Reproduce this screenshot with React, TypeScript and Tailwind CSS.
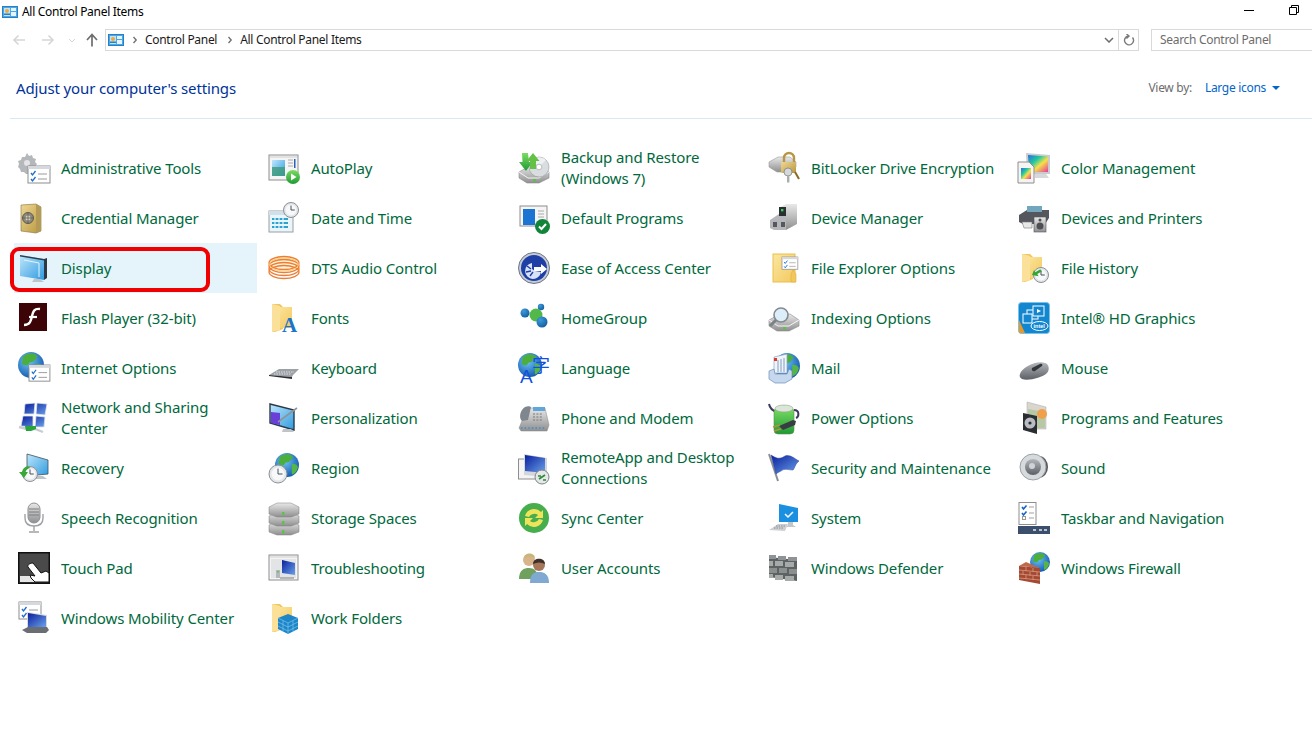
import type { ReactNode } from "react";

const Defs = () => (
  <svg width="0" height="0" className="block h-0 w-0">
    <defs>
      <linearGradient id="gray" x1="0" y1="0" x2="0" y2="1"><stop offset="0" stopColor="#e8e8e8" /><stop offset="1" stopColor="#8f8f8f" /></linearGradient>
      <linearGradient id="dark" x1="0" y1="0" x2="0" y2="1"><stop offset="0" stopColor="#b4b8bc" /><stop offset="1" stopColor="#5c6066" /></linearGradient>
      <linearGradient id="sky" x1="0" y1="0" x2="1" y2="1"><stop offset="0" stopColor="#bfe6fb" /><stop offset="1" stopColor="#2f9be0" /></linearGradient>
      <linearGradient id="navy" x1="0" y1="0" x2="1" y2="1"><stop offset="0" stopColor="#0a1f9c" /><stop offset="1" stopColor="#6aa0ea" /></linearGradient>
      <linearGradient id="gold" x1="0" y1="0" x2="1" y2="1"><stop offset="0" stopColor="#efd894" /><stop offset="1" stopColor="#b8963f" /></linearGradient>
      <linearGradient id="folder" x1="0" y1="0" x2="1" y2="1"><stop offset="0" stopColor="#fbe6a0" /><stop offset="1" stopColor="#f3c95f" /></linearGradient>
      <linearGradient id="green" x1="0" y1="0" x2="0" y2="1"><stop offset="0" stopColor="#7bdc62" /><stop offset="1" stopColor="#1f9a35" /></linearGradient>
      <linearGradient id="rainbow" x1="0" y1="0" x2="1" y2="1"><stop offset="0" stopColor="#2b6be0" /><stop offset="0.35" stopColor="#22c8a0" /><stop offset="0.6" stopColor="#f6e04a" /><stop offset="1" stopColor="#e8389a" /></linearGradient>
      <radialGradient id="globe" cx="0.4" cy="0.35" r="0.75"><stop offset="0" stopColor="#6ec4f5" /><stop offset="1" stopColor="#0b4fa8" /></radialGradient>
      <radialGradient id="ball" cx="0.35" cy="0.3" r="0.8"><stop offset="0" stopColor="#3f9ad8" /><stop offset="1" stopColor="#0e5a9e" /></radialGradient>
    </defs>
  </svg>
);

const Ico = ({ children }: { children: ReactNode }) => (
  <svg viewBox="0 0 32 32" className="h-8 w-8 shrink-0 overflow-visible">{children}</svg>
);

const Globe = ({ cx, cy, r }: { cx: number; cy: number; r: number }) => (
  <g>
    <circle cx={cx} cy={cy} r={r} fill="url(#globe)" />
    <path d={`M${cx - r * 0.6} ${cy - r * 0.7}q${r * 0.7} -${r * 0.4} ${r * 1.1} 0q-${r * 0.2} ${r * 0.5} -${r * 0.6} ${r * 0.5}q-${r * 0.2} ${r * 0.4} -${r * 0.6} ${r * 0.1}z`} fill="#4caf3c" />
    <path d={`M${cx + r * 0.4} ${cy - r * 0.1}q${r * 0.5} 0 ${r * 0.5} ${r * 0.3}q-${r * 0.1} ${r * 0.5} -${r * 0.5} ${r * 0.6}z`} fill="#55b545" />
  </g>
);

const Clock = ({ cx, cy, r }: { cx: number; cy: number; r: number }) => (
  <g>
    <circle cx={cx} cy={cy} r={r} fill="#e4e7ea" stroke="#8b9096" strokeWidth="1" />
    <circle cx={cx} cy={cy} r={r * 0.72} fill="#f7f8f9" />
    <path d={`M${cx} ${cy - r * 0.6}V${cy}H${cx + r * 0.5}`} fill="none" stroke="#4b5157" strokeWidth="1" />
  </g>
);

const Folder = () => (
  <g>
    <path d="M4 2h8l3 3v22l-8 3H4z" fill="#f0c75e" />
    <path d="M7 5h17v21H7z" fill="url(#folder)" />
    <path d="M4 2l8 2v24l-8 2z" fill="#fbe09a" />
  </g>
);

const Drive = ({ y = 0 }: { y?: number }) => (
  <g transform={`translate(0 ${y})`}>
    <path d="M1 18l11-6h10l9 6v6l-10 5H9l-8-5z" fill="url(#gray)" stroke="#8a8a8a" strokeWidth=".6" />
    <path d="M1 18l9 6h11l10-6" fill="none" stroke="#f5f5f5" strokeWidth="1" />
    <rect x="15" y="25" width="3" height="2.5" fill="#5cc24a" />
  </g>
);

const Check = ({ x, y, s = 1 }: { x: number; y: number; s?: number }) => (
  <g transform={`translate(${x} ${y}) scale(${s})`}>
    <rect width="22" height="17" fill="#fff" stroke="#8d8d8d" />
    <rect width="22" height="3" fill="#d5d8dc" />
    <path d="M3 7l1.5 2 3-4M3 13l1.5 2 3-4" fill="none" stroke="#1c6fd0" strokeWidth="1.3" />
    <path d="M10 8h9M10 13h9" stroke="#9a9a9a" />
  </g>
);

const Win = ({ children }: { children?: ReactNode }) => (
  <g>
    <rect x="1" y="3" width="29" height="25" fill="#f5f5f5" stroke="#8e8e8e" />
    <path d="M2 4h27v2H2z" fill="#e2e2e2" />
    {children}
  </g>
);

const icons: Record<string, ReactNode> = {
  admin: (
    <>
      <path d="M9 1l2 3 3-1 1 3 3 1-1 3 2 2-2 3 1 3-3 1-1 3H8l-2-2-3 0-1-3-2-2 1-3-1-3 3-1 1-3 3 0z" fill="#b5b8bb" />
      <circle cx="9" cy="11" r="3" fill="#e2e4e6" />
      <Check x={10} y={14} />
    </>
  ),
  autoplay: (
    <>
      <Win>
        <rect x="4" y="8" width="13" height="16" fill="url(#sky)" />
        <rect x="4" y="15" width="13" height="9" fill="#3f9a78" opacity=".8" />
        <path d="M20 8h5M20 11h5M20 14h5" stroke="#aaa" />
        <rect x="26" y="7" width="1.5" height="9" fill="#2a62b8" />
      </Win>
      <circle cx="25" cy="25" r="7" fill="url(#green)" />
      <path d="M23 21.5l5.5 3.5-5.5 3.5z" fill="#fff" />
    </>
  ),
  backup: (
    <>
      <Drive y={2} />
      <circle cx="21" cy="15" r="10" fill="#d9dde0" stroke="#9a9a9a" strokeWidth=".6" />
      <path d="M21 15L14 8a10 10 0 0 1 14 0z" fill="#eef0f2" />
      <circle cx="21" cy="15" r="2.800" fill="#fff" stroke="#999" strokeWidth=".6" />
      <path d="M4 1l6 0 1 9h3.500l-6.500 9-7-9h3.500z" fill="url(#green)" />
      <path d="M12 17V9H8.500l6.500-8 6.500 8H18v8z" fill="#63c246" />
    </>
  ),
  bitlocker: (
    <>
      <path d="M1 10l9-5h12l6 5v5l-9 5H9l-8-5z" fill="url(#gray)" stroke="#9a9a9a" strokeWidth=".6" />
      <path d="M16 11V6a5 5 0 0 1 10 0v5" fill="none" stroke="#b89643" strokeWidth="2.4" />
      <rect x="13" y="10" width="15" height="11" rx="1.5" fill="url(#gold)" />
      <path d="M27 20l4 7" stroke="#8a6a24" strokeWidth="2" />
      <circle cx="20" cy="20" r="4" fill="#d5d8da" stroke="#777" strokeWidth=".7" />
      <rect x="19" y="23" width="2.4" height="7.5" fill="#a9adb0" />
    </>
  ),
  color: (
    <>
      <path d="M8 1l24 2v19H9z" fill="#c8ccd0" />
      <path d="M10 3l20 1.5V20H11z" fill="url(#rainbow)" />
      <path d="M17 22h11l3 4H17z" fill="#d6d8da" />
      <path d="M0 10h11l5 5v16H0z" fill="#f4f4f4" stroke="#8e8e8e" />
      <rect x="3" y="16" width="10" height="11" fill="url(#rainbow)" />
    </>
  ),
  credential: (
    <>
      <path d="M3 3l15-1 5 3v24l-5 2-15-2z" fill="url(#gold)" stroke="#85713a" strokeWidth=".6" />
      <path d="M18 2l5 3v24l-5 2z" fill="#b39a55" />
      <circle cx="10" cy="16" r="5.500" fill="#8e8a7c" stroke="#5e5a4e" />
      <circle cx="10" cy="16" r="2.500" fill="#d7d3c5" />
      <path d="M10 11v10M5 16h10" stroke="#55524a" strokeWidth=".7" />
    </>
  ),
  date: (
    <>
      <rect x="1" y="9" width="24" height="21" fill="#e9f5fb" stroke="#9a9ea2" />
      <rect x="1" y="9" width="24" height="4" fill="#cfe0ea" />
      <path d="M4 16h16v2H4zM4 20h16v2H4zM4 24h16v2H4z" fill="#2aa4cf" />
      <path d="M7 15v12M11 15v12M15 15v12" stroke="#e9f5fb" strokeWidth="1.2" />
      <Clock cx={23} cy={8} r={7.5} />
    </>
  ),
  defaults: (
    <>
      <rect x="2" y="4" width="27" height="20" fill="#f5f5f5" stroke="#8e8e8e" />
      <rect x="5" y="7" width="12" height="16" fill="#1c74d2" />
      <path d="M20 9h6M20 12h6M20 15h6" stroke="#aaa" />
      <circle cx="24.5" cy="24.5" r="7.5" fill="#10853a" />
      <path d="M21 24.5l2.5 2.5 4.5-5" fill="none" stroke="#fff" strokeWidth="2" />
    </>
  ),
  device: (
    <>
      <path d="M11 6l7-4h11v20l-11 6z" fill="url(#gray)" />
      <path d="M2 18l9-6h7v16H6l-4-2z" fill="#b5b7ba" />
      <rect x="11" y="5" width="7" height="9" fill="#2b2e33" />
      <rect x="13" y="7" width="2.4" height="2.4" fill="#36d05a" />
      <rect x="5" y="20" width="4" height="5" fill="#55585d" />
      <rect x="13" y="20" width="4" height="5" fill="#55585d" />
    </>
  ),
  devices: (
    <>
      <path d="M1 13l8-5h22v8l-4 6H5l-4-2z" fill="#54585e" />
      <rect x="9" y="4" width="15" height="6" fill="#71a6bc" />
      <path d="M4 20h10v6H6z" fill="#e8e8e8" stroke="#777" strokeWidth=".6" />
      <rect x="16" y="15" width="12" height="15" fill="url(#gray)" stroke="#555" strokeWidth=".6" />
      <circle cx="22" cy="24" r="3.5" fill="#4c4f54" />
      <circle cx="22" cy="18" r="1.5" fill="#4c4f54" />
    </>
  ),
  display: (
    <>
      <path d="M2 3l24 4v21L2 24z" fill="url(#sky)" />
      <path d="M26 7l3-1v20l-3 2z" fill="#2d3a46" />
      <path d="M2 3l24 4v1.500L2 4.500z" fill="#2f3e4e" />
      <path d="M6 8l15 3v14" fill="none" stroke="#e2f5ff" strokeWidth="1" />
      <path d="M16 27h6l4 3H14z" fill="#c0c4c8" />
    </>
  ),
  dts: (
    <>
      <ellipse cx="16" cy="11" rx="15" ry="6" fill="#fdf3d8" />
      {[11, 14, 17, 20].map((y) => (
        <ellipse key={y} cx="16" cy={y} rx="15" ry="6.500" fill="none" stroke="#ee7c35" strokeWidth="1.300" />
      ))}
      <ellipse cx="16" cy="12.500" rx="14.500" ry="6.500" fill="none" stroke="#f6cf72" strokeWidth="1" />
    </>
  ),
  ease: (
    <>
      <circle cx="16" cy="16" r="15.5" fill="#c5cbd6" stroke="#6f7783" />
      <circle cx="16" cy="16" r="13" fill="#1d3fa6" />
      <path d="M16 5v10h7v-3l6 5-6 5v-3h-7" fill="#fff" />
      <path d="M14 11a8 8 0 1 0 9 9l-6-1-3-2z" fill="#d8e2f5" />
      <path d="M9 14l4 3M8 20l5-1M12 24l3-4" stroke="#1d3fa6" strokeWidth="1.4" />
    </>
  ),
  explorer: (
    <>
      <rect x="5" y="2" width="22" height="28" fill="url(#folder)" stroke="#e9bf4a" />
      <Check x={14} y={5} s={0.72} />
      <path d="M25 18l3 4v8h-5v-8z" fill="#f0c85f" stroke="#e2b03d" strokeWidth=".6" />
    </>
  ),
  history: (
    <>
      <Folder />
      <Clock cx={23} cy={23} r={7.5} />
      <path d="M17 15v7h-3l4 5 5-6h-3v-6z" fill="#35a535" transform="rotate(60 18 21) scale(.85) translate(3 3)" />
    </>
  ),
  flash: (
    <>
      <rect x="1" y="1" width="28" height="28" fill="#3d0407" />
      <path d="M22 7c-6-1-7 3-8 7-1 5-2 9-8 9" fill="none" stroke="#fff" strokeWidth="2.4" />
      <path d="M11 15h8" stroke="#fff" strokeWidth="2.2" />
    </>
  ),
  fonts: (
    <>
      <Folder />
      <text x="14" y="30" fontFamily="'Liberation Serif',serif" fontWeight="700" fontSize="21" fill="#1a74c9">A</text>
    </>
  ),
  home: (
    <>
      <circle cx="7" cy="11" r="4.5" fill="url(#ball)" />
      <circle cx="23" cy="5" r="3.2" fill="url(#ball)" />
      <circle cx="18" cy="13" r="6.5" fill="#52b84a" />
      <circle cx="24" cy="20" r="5.5" fill="url(#ball)" />
    </>
  ),
  indexing: (
    <>
      <Drive y={0} />
      <circle cx="13" cy="13" r="7" fill="#dbeefa" stroke="#848a90" strokeWidth="1.6" />
      <path d="M8 18l-6 6" stroke="#7c8187" strokeWidth="3" />
    </>
  ),
  intel: (
    <>
      <rect x="0.5" y="0.5" width="31" height="31" rx="3" fill="#1386d0" stroke="#7fc0e8" />
      <path d="M1 18l6 13H1z" fill="#e89a24" />
      <rect x="9" y="8" width="11" height="9" fill="none" stroke="#fff" />
      <rect x="15" y="4" width="11" height="10" fill="#1386d0" stroke="#fff" />
      <rect x="5" y="12" width="9" height="9" fill="#1386d0" stroke="#fff" />
      <path d="M19 7l4 2-4 2z" fill="#fff" />
      <ellipse cx="21.5" cy="24" rx="8.5" ry="4.5" fill="none" stroke="#fff" />
      <text x="15.5" y="26" fontFamily="'Liberation Sans',sans-serif" fontWeight="700" fontSize="5.5" fill="#fff">intel</text>
    </>
  ),
  internet: (
    <>
      <Globe cx={13} cy={13} r={13} />
      <Check x={11} y={13} s={0.95} />
    </>
  ),
  keyboard: (
    <>
      <path d="M1 23l10-6h20l-6 6-1 2z" fill="#9da1a6" />
      <path d="M1 23l23 2 0 2L1 24z" fill="#2c2f33" />
      <path d="M8 20h18M6 22h17" stroke="#e0e2e4" strokeDasharray="1.5 1" />
    </>
  ),
  language: (
    <>
      <Globe cx={12} cy={13} r={12} />
      <text x="2" y="31" fontFamily="'Liberation Sans',sans-serif" fontSize="19" fill="#1250e0">A</text>
      <text x="14" y="20" fontFamily="'Noto Sans CJK SC',sans-serif" fontSize="18" fill="#1250e0">字</text>
    </>
  ),
  mail: (
    <>
      <Globe cx={19} cy={14} r={13} />
      <path d="M6 5l13-3v19H6z" fill="#f2f5f8" stroke="#8ea4c4" strokeWidth=".7" />
      <path d="M10 8v12M13 7v13M16 6v14" stroke="#7e9bc4" />
      <rect x="6" y="6" width="3" height="3" fill="#e0352b" />
      <path d="M1 19l5-2 1 5h12l2-5 3 2v8l-7 4H7l-6-4z" fill="#c5d8ee" stroke="#6f8fbc" strokeWidth=".7" />
    </>
  ),
  mouse: (
    <>
      <path d="M2 22c2-7 17-14 25-11 4 1 5 7 2 10-5 5-19 8-25 6-2-1-3-3-2-5z" fill="url(#dark)" />
      <path d="M14 16l8-4c2-1 3 1 2 2l-7 5c-2 1-4-1-3-3z" fill="#33373c" />
    </>
  ),
  network: (
    <>
      <path d="M7 2l10-1-1 11H6zM19 1l10 1-2 11-9-1z" fill="url(#navy)" stroke="#dfe3ea" strokeWidth=".8" />
      <path d="M5 14l10 0 0 11-12-1zM18 14l9 1-1 10-9 0z" fill="url(#navy)" stroke="#dfe3ea" strokeWidth=".8" />
      <path d="M1 25l8 2h8l8 3" fill="none" stroke="#c9cdd1" strokeWidth="2.4" />
      <path d="M7 24h11v3l-5 2H8z" fill="#2aa43c" />
    </>
  ),
  personal: (
    <>
      <path d="M2 2l24 6v20L2 21z" fill="url(#sky)" stroke="#2b3a48" strokeWidth="1.4" />
      <path d="M3 10l9 1v12l-9-2z" fill="#6a3ed8" />
      <path d="M10 20L29 6" stroke="#8f9398" strokeWidth="1.6" />
      <path d="M15 27h8l3 3H14z" fill="#c0c4c8" />
    </>
  ),
  phone: (
    <>
      <path d="M1 26l6-14 5-6h15l4 17-2 6H3z" fill="url(#gray)" stroke="#858585" strokeWidth=".5" />
      <path d="M4 8c3-5 8-4 9-3l-3 13-6 1c-3-3-2-8 0-11z" fill="#7f868d" />
      <rect x="15" y="5" width="12" height="4" fill="#5da7db" />
      <path d="M15 12h10M15 15h10M15 18h10" stroke="#777" strokeDasharray="2 1.4" />
      <path d="M3 26h25" stroke="#3e8fd0" strokeDasharray="1.6 2" strokeWidth="1.6" />
    </>
  ),
  power: (
    <>
      <path d="M1 2c1 5 4 7 8 8M26 8c6 0 5 7 2 8" fill="none" stroke="#3e3a5e" strokeWidth="2" />
      <rect x="6" y="6" width="20" height="26" rx="4" fill="url(#green)" stroke="#5c8f5c" strokeWidth=".6" />
      <ellipse cx="16" cy="6.500" rx="9" ry="3.500" fill="#dbe6d8" stroke="#8fa28c" strokeWidth=".6" />
      <path d="M11 24l14-6 3 1-1 4-12 5z" fill="#393c42" />
      <path d="M5 25l7-2M6 29l7-2" stroke="#b98f3e" strokeWidth="1.600" />
    </>
  ),
  programs: (
    <>
      <path d="M9 0l19 5v22H9z" fill="#d8d6cf" stroke="#a8a6a0" strokeWidth=".5" />
      <path d="M10 7l17 3v16H10z" fill="#b6c8a4" />
      <circle cx="24" cy="12" r="5" fill="#f0a04a" />
      <path d="M5 11l14 3v18L5 28z" fill="#2a2d31" />
      <circle cx="12" cy="21" r="5.5" fill="#b9bdc2" />
      <circle cx="12" cy="21" r="1.6" fill="#2a2d31" />
    </>
  ),
  recovery: (
    <>
      <path d="M9 2l21 6v14l-21 2z" fill="url(#sky)" stroke="#40505c" strokeWidth=".8" />
      <path d="M15 24h10l4 3H17z" fill="#c0c4c8" />
      <Clock cx={12} cy={22} r={7.5} />
      <path d="M1 20l5 6 4-6H7.500c1-3 3-4 5-4l-3-2c-3 1-5 3-5.500 6z" fill="#38a838" />
    </>
  ),
  region: (
    <>
      <Globe cx={19} cy={13} r={12} />
      <Clock cx={10} cy={22} r={9} />
    </>
  ),
  remote: (
    <>
      <rect x="0.5" y="7" width="20" height="20" fill="#f4f4f4" stroke="#8e8e8e" />
      <path d="M6 2l23 4v19l-23-2z" fill="#d4d7da" />
      <path d="M7 3l20 3v15L7 19z" fill="url(#navy)" />
      <circle cx="24" cy="25" r="7" fill="#e5e8e6" stroke="#7f8488" />
      <path d="M21 27l6-4M20 24h3M25 28h3" stroke="#2a8a3e" strokeWidth="1.6" />
    </>
  ),
  security: (
    <>
      <path d="M1 2l9 27" stroke="#8a8e93" strokeWidth="2" />
      <path d="M3 3c5 3 8 5 14 1 5-2 10 3 14 5-4 3-4 7-6 9-5 0-8-2-12 1-2 1-4 2-5 3z" fill="url(#navy)" stroke="#30409a" strokeWidth=".5" />
    </>
  ),
  sound: (
    <>
      <ellipse cx="21" cy="15" rx="9" ry="11" fill="#55585c" />
      <circle cx="15" cy="15" r="13" fill="#d6dadd" stroke="#9da1a5" />
      <circle cx="15" cy="15" r="8" fill="url(#dark)" />
      <circle cx="14" cy="14" r="3" fill="#d0d4d8" />
    </>
  ),
  speech: (
    <>
      <rect x="10" y="1" width="12" height="20" rx="6" fill="url(#gray)" stroke="#8d8f92" />
      <path d="M11 7h10M11 10h10M11 13h10" stroke="#7a7d80" />
      <path d="M7 12v4c0 6 4 8 9 8s9-2 9-8v-4" fill="none" stroke="#9fa2a5" strokeWidth="1.4" />
      <path d="M16 24v5M11 30h10" stroke="#9fa2a5" strokeWidth="1.4" />
    </>
  ),
  storage: (
    <>
      {[18, 9, 0].map((y) => (
        <g key={y} transform={`translate(0 ${y})`}>
          <path d="M1 5l8-4h14l8 4v7l-8 3H9l-8-3z" fill="url(#gray)" stroke="#7f7f7f" strokeWidth=".5" />
          <rect x="14" y="10" width="2.4" height="3.4" fill="#5cc24a" />
        </g>
      ))}
    </>
  ),
  sync: (
    <>
      <circle cx="16" cy="16" r="15" fill="#46ae4c" />
      <path d="M7 14a9.500 9.500 0 0 1 16-4l2-2v8h-8l3-3a6 6 0 0 0-9 2z" fill="#efe35a" />
      <path d="M25 18a9.500 9.500 0 0 1-16 4l-2 2v-8h8l-3 3a6 6 0 0 0 9-2z" fill="#efe35a" />
    </>
  ),
  system: (
    <>
      <path d="M11 2l19 4v14H11z" fill="#1b8fe0" />
      <path d="M17 12l3 3 5-5" fill="none" stroke="#fff" strokeWidth="1.5" />
      <path d="M20 20h5v3l3 2H18l2-2z" fill="#c4c7ca" />
      <path d="M1 28l9-6h10l-3 7z" fill="#cdd0d3" />
      <path d="M6 26h9M8 24h9" stroke="#8a8d90" strokeDasharray="1.5 1" />
    </>
  ),
  taskbar: (
    <>
      <rect x="1" y="0.5" width="17" height="22" fill="#fff" stroke="#8e8e8e" />
      <path d="M4 5l1.500 2 3-3.500M4 11l1.500 2 3-3.500" fill="none" stroke="#1565c8" strokeWidth="1.6" />
      <path d="M11 5h5M11 11h5M11 16h5" stroke="#a0a0a0" />
      <rect x="4.5" y="14.5" width="3" height="3" fill="none" stroke="#999" />
      <rect y="24" width="32" height="8" fill="#3b4e6c" />
      <path d="M15 27h3v2h-3zM21 27h3v2h-3zM26 27h3v2h-3z" fill="#b8c2d2" />
    </>
  ),
  touch: (
    <>
      <rect x="0.75" y="0.75" width="30.5" height="30.5" fill="#4a4a4a" stroke="#111" strokeWidth="1.5" />
      <rect x="2" y="24" width="15" height="6" fill="#e6e6e6" />
      <path d="M15 11l8 10 5-2 3 2v9H17l-4-4-1-3 5 1-7-9c-1-2 2-4 5-4z" fill="#fff" stroke="#111" strokeWidth="1" />
    </>
  ),
  trouble: (
    <>
      <Win />
      <rect x="3" y="7" width="25" height="19" fill="#e2e4e6" />
      <path d="M14 8l13 3v12l-13-2z" fill="url(#navy)" />
      <rect x="8" y="18" width="4" height="8" fill="#b5b8bb" />
      <rect x="9.2" y="19" width="1.5" height="1.5" fill="#46c04a" />
      <path d="M12 26h14" stroke="#9fa2a5" strokeWidth="1.5" />
    </>
  ),
  users: (
    <>
      <circle cx="11" cy="8" r="6" fill="#d8b48c" />
      <path d="M6 6c0-6 11-6 11 0-4-2-7-2-11 0z" fill="#c7b67a" />
      <path d="M1 27c0-9 5-11 10-11s9 3 9 11z" fill="#6fa05e" />
      <circle cx="21" cy="13" r="6" fill="#a5765a" />
      <path d="M15 12c0-7 12-7 12 0-4-2-8-2-12 0z" fill="#3e3128" />
      <path d="M12 31c0-9 4-11 9-11s10 2 10 11z" fill="#7fa9d0" />
    </>
  ),
  defender: (
    <>
      <path d="M1 5l28 3v21L1 25z" fill="#5f6265" />
      <path d="M1 3h7v4H1zM10 4h8v4h-8zM20 5h9v4h-9z" fill="#8f9396" />
      <path d="M1 9h4v5H1zM7 9h8v5H7zM17 10h9v5h-9z" fill="#a6aaa8" />
      <path d="M1 16h8v5H1zM11 16h8v5h-8zM21 17h8v5h-8z" fill="#8b8f8e" />
      <path d="M1 22h4v4H1zM7 23h8v5H7zM17 24h9v5h-9z" fill="#a6aaa8" />
    </>
  ),
  firewall: (
    <>
      <Globe cx={22} cy={10} r={10} />
      <path d="M1 14l21 2v16L1 28z" fill="#a54a32" />
      <path d="M1 14l7-4 14 6-21-2z" fill="#c06a4c" />
      <path d="M1 18l21 2M1 22l21 2M1 26l21 2M8 15v4M15 16v4M5 19v4M12 20v4M19 20v4M8 23v4M15 24v4" stroke="#e0a58c" strokeWidth=".7" />
    </>
  ),
  mobility: (
    <>
      <Check x={1} y={0} s={1} />
      <path d="M9 10l20 3v13H9z" fill="#d7dadd" />
      <path d="M10 11l18 3v11H10z" fill="url(#navy)" />
      <path d="M4 28l6-3h19l2 3-3 3H9z" fill="#6a6d72" />
    </>
  ),
  work: (
    <>
      <Folder />
      <path d="M20 12l10 4v11l-10 5-10-5V16z" fill="#1c86c8" />
      <path d="M10 16l10 5 10-5M20 21v11M10 20l10 5 10-5M10 24l10 5 10-5M15 18.500v11M25 18.500v11" fill="none" stroke="#7cc4ec" strokeWidth=".7" />
    </>
  ),
};

const items: [string, string][] = [
  ["admin", "Administrative Tools"],
  ["autoplay", "AutoPlay"],
  ["backup", "Backup and Restore\n(Windows 7)"],
  ["bitlocker", "BitLocker Drive Encryption"],
  ["color", "Color Management"],
  ["credential", "Credential Manager"],
  ["date", "Date and Time"],
  ["defaults", "Default Programs"],
  ["device", "Device Manager"],
  ["devices", "Devices and Printers"],
  ["display", "Display"],
  ["dts", "DTS Audio Control"],
  ["ease", "Ease of Access Center"],
  ["explorer", "File Explorer Options"],
  ["history", "File History"],
  ["flash", "Flash Player (32-bit)"],
  ["fonts", "Fonts"],
  ["home", "HomeGroup"],
  ["indexing", "Indexing Options"],
  ["intel", "Intel® HD Graphics"],
  ["internet", "Internet Options"],
  ["keyboard", "Keyboard"],
  ["language", "Language"],
  ["mail", "Mail"],
  ["mouse", "Mouse"],
  ["network", "Network and Sharing\nCenter"],
  ["personal", "Personalization"],
  ["phone", "Phone and Modem"],
  ["power", "Power Options"],
  ["programs", "Programs and Features"],
  ["recovery", "Recovery"],
  ["region", "Region"],
  ["remote", "RemoteApp and Desktop\nConnections"],
  ["security", "Security and Maintenance"],
  ["sound", "Sound"],
  ["speech", "Speech Recognition"],
  ["storage", "Storage Spaces"],
  ["sync", "Sync Center"],
  ["system", "System"],
  ["taskbar", "Taskbar and Navigation"],
  ["touch", "Touch Pad"],
  ["trouble", "Troubleshooting"],
  ["users", "User Accounts"],
  ["defender", "Windows Defender"],
  ["firewall", "Windows Firewall"],
  ["mobility", "Windows Mobility Center"],
  ["work", "Work Folders"],
];

const PanelIcon = () => (
  <svg viewBox="0 0 16 12" className="h-3 w-4 shrink-0">
    <rect x="0.5" y="0.5" width="15" height="11" fill="#4aa8e8" stroke="#2a7fc0" />
    <rect x="2" y="2" width="6" height="8" fill="#bfe4fa" />
    <rect x="9" y="2" width="5" height="3" fill="#e4f4fd" />
    <rect x="9" y="6" width="5" height="4" fill="#e4f4fd" />
    <circle cx="5" cy="5" r="2" fill="#f0a83c" />
    <rect x="2" y="7.5" width="6" height="1.5" fill="#2a7fc0" />
  </svg>
);

const Arrow = ({ color, flip }: { color: string; flip?: boolean }) => (
  <svg viewBox="0 0 14 12" className={flip ? "h-3 w-[14px] rotate-180" : "h-3 w-[14px]"}>
    <path d="M13 6H2M6.500 1.500L2 6l4.500 4.500" fill="none" stroke={color} strokeWidth="1.6" />
  </svg>
);

const Crumb = () => (
  <svg viewBox="0 0 6 8" className="ml-[8px] mr-[7px] h-2 w-[6px]">
    <path d="M1.500 1l2.700 3-2.700 3" fill="none" stroke="#6d6d6d" strokeWidth="1.3" />
  </svg>
);

export default function App() {
  return (
    <div className="relative h-[734px] w-[1312px] overflow-hidden bg-white font-['Noto_Sans',sans-serif] text-black">
      <Defs />
      <div className="flex h-[24px] items-center pl-[2px] text-[12px] tracking-[-0.3px]">
        <PanelIcon />
        <span className="ml-1">All Control Panel Items</span>
        <div className="ml-auto flex items-center">
          <span className="mr-[35px] mt-[-4px] h-px w-[10px] bg-black" />
          <svg viewBox="0 0 10 10" className="mb-[4px] mr-[13px] h-[10px] w-[10px]">
            <path d="M2.500 2.500V.5h7v7h-2M.5 2.500h7v7h-7z" fill="none" stroke="#000" />
          </svg>
        </div>
      </div>
      <div className="mt-[5px] flex h-[22px] items-center">
        <div className="ml-[12px] flex items-center">
          <Arrow color="#d6d6d6" />
          <span className="ml-[15px]"><Arrow color="#d6d6d6" flip /></span>
          <svg viewBox="0 0 8 5" className="ml-[13px] h-[5px] w-2"><path d="M1 1l3 3 3-3" fill="none" stroke="#d6d6d6" /></svg>
          <svg viewBox="0 0 12 14" className="ml-[10px] h-[14px] w-3"><path d="M6 13.500V2M1 7l5-5.500L11 7" fill="none" stroke="#6d6d6d" strokeWidth="1.7" /></svg>
        </div>
        <div className="ml-[7px] flex h-[22px] w-[1034px] items-center border border-[#d9d9d9] pl-[2px] text-[12px] tracking-[-0.3px] text-[#1a1a1a]">
          <PanelIcon />
          <Crumb />
          <span>Control Panel</span>
          <span className="ml-[2px]"><Crumb /></span>
          <span>All Control Panel Items</span>
          <div className="ml-auto flex h-full items-center">
            <svg viewBox="0 0 10 6" className="mr-[4px] h-[6px] w-[10px]"><path d="M1 1l4 4 4-4" fill="none" stroke="#6d6d6d" strokeWidth="1.5" /></svg>
            <div className="flex h-full w-[20px] items-center justify-center border-l border-[#d9d9d9]">
              <svg viewBox="0 0 12 12" className="h-3 w-3"><path d="M9.500 3.500A4.500 4.500 0 1 1 5 2M3.500 0L6 2 3.500 4.500" fill="none" stroke="#7a7a7a" strokeWidth="1.4" /></svg>
            </div>
          </div>
        </div>
        <div className="ml-[12px] flex h-[22px] flex-1 items-center border border-r-0 border-[#d9d9d9] pl-2 text-[12px] tracking-[-0.3px] text-[#6d6d6d]">Search Control Panel</div>
      </div>
      <div className="ml-[10px] flex h-[68px] items-start justify-between border-b border-[#d9e8f5] pt-[26px]">
        <h1 className="ml-[6px] text-[15px] font-normal leading-[22px] tracking-[-0.13px] text-[#003399]">Adjust your computer's settings</h1>
        <div className="mr-[32px] flex h-[22px] items-center text-[12px] tracking-[-0.3px]">
          <span className="text-[#6d6d6d]">View by:</span>
          <span className="ml-[13px] text-[#0066cc]">Large icons</span>
          <span className="ml-[6px] h-0 w-0 border-x-[4px] border-t-[4px] border-x-transparent border-t-[#0066cc]" />
        </div>
      </div>
      <div className="ml-[14px] mt-[24px] grid grid-cols-[repeat(5,243px)] auto-rows-[50px] gap-x-[7px]">
        {items.map(([id, label]) => (
          <div key={id} className={id === "display" ? "flex items-center bg-[#e5f3fb] pl-1" : "flex items-center pl-1"}>
            <Ico>{icons[id]}</Ico>
            <span className="ml-[11px] whitespace-pre-line text-[15px] leading-[21px] tracking-[-0.12px] text-[#00693c]">{label}</span>
          </div>
        ))}
      </div>
      <div className="absolute left-[10px] top-[247px] h-[45px] w-[200px] rounded-[9px] border-[4px] border-[#f00000]" />
    </div>
  );
}
